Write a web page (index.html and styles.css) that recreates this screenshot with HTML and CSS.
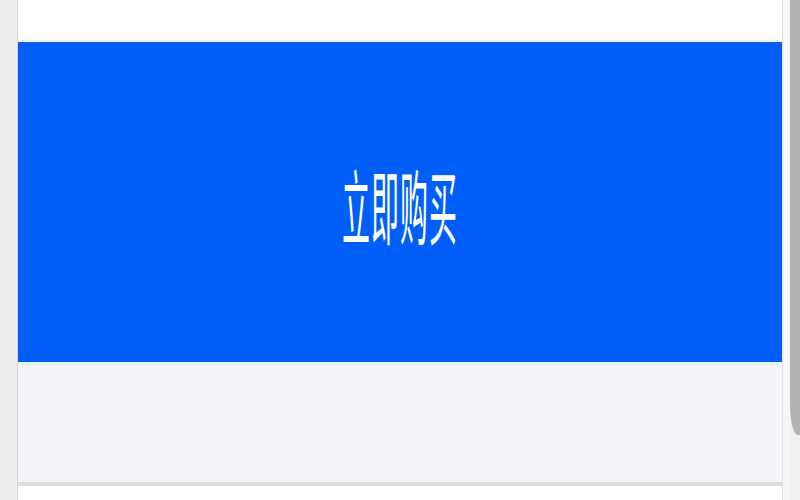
FILE: index.html
```html
<!DOCTYPE html>
<html>
<head>
  <meta charset="utf-8">
  <title>立即购买</title>
  <link rel="stylesheet" href="styles.css">
</head>
<body>
  <div class="frame">
    <div class="gutter"></div>
    <main class="sheet">
      <div class="sheet-top"></div>
      <button class="buy-btn"><span class="buy-label">立即购买</span></button>
      <div class="sheet-gap"></div>
      <div class="sheet-next"></div>
    </main>
    <div class="rail">
      <div class="rail-track"></div>
      <div class="rail-thumb"></div>
    </div>
  </div>
</body>
</html>
```

FILE: styles.css
```css
html {
  font-family: "Noto Sans CJK SC", "Noto Sans", sans-serif;
}

* {
  box-sizing: border-box;
}

body {
  margin: 0;
  background: #f0f0f2;
}

.frame {
  display: flex;
  height: 500px;
  overflow: hidden;
}

.gutter {
  width: 18px;
  background: #eeeef0;
  border-right: 1px solid #d4d4d6;
  flex: none;
}

.sheet {
  width: 764px;
  display: flex;
  flex-direction: column;
  background: #f4f5f9;
}

.sheet-top {
  height: 42px;
  background: #ffffff;
  border-bottom: 2px solid #e6f4fb; /* soft edge above the button */
}

.buy-btn {
  height: 320px;
  border: 0;
  border-top: 1px solid #2a5fb8;
  margin: 0;
  padding: 0;
  background: #005ff9;
  color: #ffffff;
  display: flex;
  align-items: center;
  justify-content: center;
  font-family: inherit;
  cursor: pointer;
}

.buy-label {
  display: inline-block;
  font-size: 28px;
  font-weight: 400;
  letter-spacing: 1px;
  transform: scaleY(2.9); /* tall, narrow label */
}

.sheet-gap {
  height: 120px;
  border-top: 4px solid #e9f2fb;
  background: #f4f5f9;
}

.sheet-next {
  flex: 1;
  background: #ffffff;
  border-top: 4px solid #dcdcde;
}

.rail {
  flex: 1;
  display: flex;
}

.rail-track {
  width: 8px;
  background: #f6f6f8;
  border-left: 1px solid #e2e2e4;
}

.rail-thumb {
  flex: 1;
  height: 435px;
  background: #b2b2b2;
  border-bottom-left-radius: 8px 30px;
}
```
